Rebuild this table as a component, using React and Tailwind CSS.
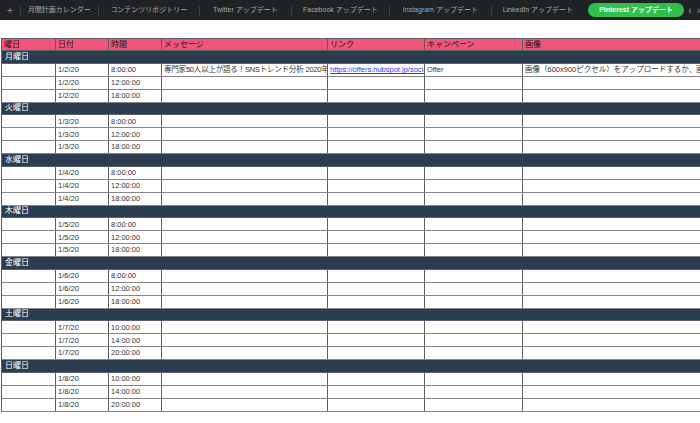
const TABS = [
  { label: "月間計画カレンダー", w: "w-[77px]" },
  { label: "コンテンツリポジトリー", w: "w-[100px]" },
  { label: "Twitter アップデート", w: "w-[91px]" },
  { label: "Facebook アップデート", w: "w-[97px]" },
  { label: "Instagram アップデート", w: "w-[101px]" },
  { label: "LinkedIn アップデート", w: "w-[92px]" },
];

const DAYS = [
  { name: "月曜日", date: "1/2/20", times: ["8:00:00", "12:00:00", "18:00:00"] },
  { name: "火曜日", date: "1/3/20", times: ["8:00:00", "12:00:00", "18:00:00"] },
  { name: "水曜日", date: "1/4/20", times: ["8:00:00", "12:00:00", "18:00:00"] },
  { name: "木曜日", date: "1/5/20", times: ["8:00:00", "12:00:00", "18:00:00"] },
  { name: "金曜日", date: "1/6/20", times: ["8:00:00", "12:00:00", "18:00:00"] },
  { name: "土曜日", date: "1/7/20", times: ["10:00:00", "14:00:00", "20:00:00"] },
  { name: "日曜日", date: "1/8/20", times: ["10:00:00", "14:00:00", "20:00:00"] },
];

const HEADERS = ["曜日", "日付", "時間", "メッセージ", "リンク", "キャンペーン", "画像"];
const WIDTHS = ["w-[54px]", "w-[53px]", "w-[53px]", "w-[166px]", "w-[97px]", "w-[98px]", "w-[260px]"];

const font = { fontFamily: '"Liberation Sans", "Noto Sans CJK JP", sans-serif' };

function Cell({ i, children, className = "" }) {
  return (
    <div
      className={`${WIDTHS[i]} shrink-0 h-full border-r border-[#5e5e5e] px-[2px] overflow-hidden whitespace-nowrap flex items-center ${className}`}
    >
      {children}
    </div>
  );
}

export default function App() {
  return (
    <div className="w-[700px] h-[423px] overflow-hidden bg-white" style={font}>
      {/* sheet tab bar */}
      <div className="h-[20px] bg-[#1f2326] flex items-center text-[7px] text-[#a3a8ab]">
        <span className="w-[20px] text-center text-[10px] text-[#8a8f92]">+</span>
        {TABS.map((t, i) => (
          <div key={t.label} className="flex items-center">
            <span className="h-[9px] w-px bg-[#3a3f42]" />
            <span className={`${t.w} text-center`}>{t.label}</span>
          </div>
        ))}
        <div className="ml-[4px] h-[14px] w-[97px] rounded-full bg-[#2fbf4a] text-white font-bold flex items-center justify-center">
          Pinterest アップデート
        </div>
        <span className="ml-[4px] text-[10px] text-[#9aa0a4]">‹</span>
        <span className="ml-[5px] text-[10px] text-[#9aa0a4]">›</span>
      </div>

      {/* spreadsheet */}
      <div className="pt-[18px] pl-[1px]">
        <div className="w-[780px] border-l border-[#5e5e5e] text-[7.5px] text-[#333]">
          <div className="flex h-[13px] bg-[#f2557a] border-t border-b border-[#5e5e5e] text-[8px] text-[#2e1218]">
            {HEADERS.map((h, i) => (
              <Cell key={h} i={i}>{h}</Cell>
            ))}
          </div>
          {DAYS.map((d, di) => (
            <div key={d.name}>
              <div className="h-[12.875px] bg-[#2c3d4f] border-b border-[#56636f] flex items-center px-[3px] text-[8px] text-white">
                {d.name}
              </div>
              {d.times.map((t, ti) => (
                <div key={t} className="flex h-[12.875px] border-b border-[#858585]">
                  <Cell i={0} />
                  <Cell i={1}>{d.date}</Cell>
                  <Cell i={2}>{t}</Cell>
                  <Cell i={3} className="tracking-[-0.2px]">
                    {di === 0 && ti === 0 ? "専門家50人以上が語る！SNSトレンド分析 2020年版" : ""}
                  </Cell>
                  <Cell i={4}>
                    {di === 0 && ti === 0 ? (
                      <span className="text-[#1a3cff] underline">https://offers.hubspot.jp/social-media-trends</span>
                    ) : null}
                  </Cell>
                  <Cell i={5}>{di === 0 && ti === 0 ? "Offer" : ""}</Cell>
                  <Cell i={6}>
                    {di === 0 && ti === 0 ? "画像（600x900ピクセル）をアップロードするか、画像のURLを入力してください" : ""}
                  </Cell>
                </div>
              ))}
            </div>
          ))}
        </div>
      </div>
    </div>
  );
}
